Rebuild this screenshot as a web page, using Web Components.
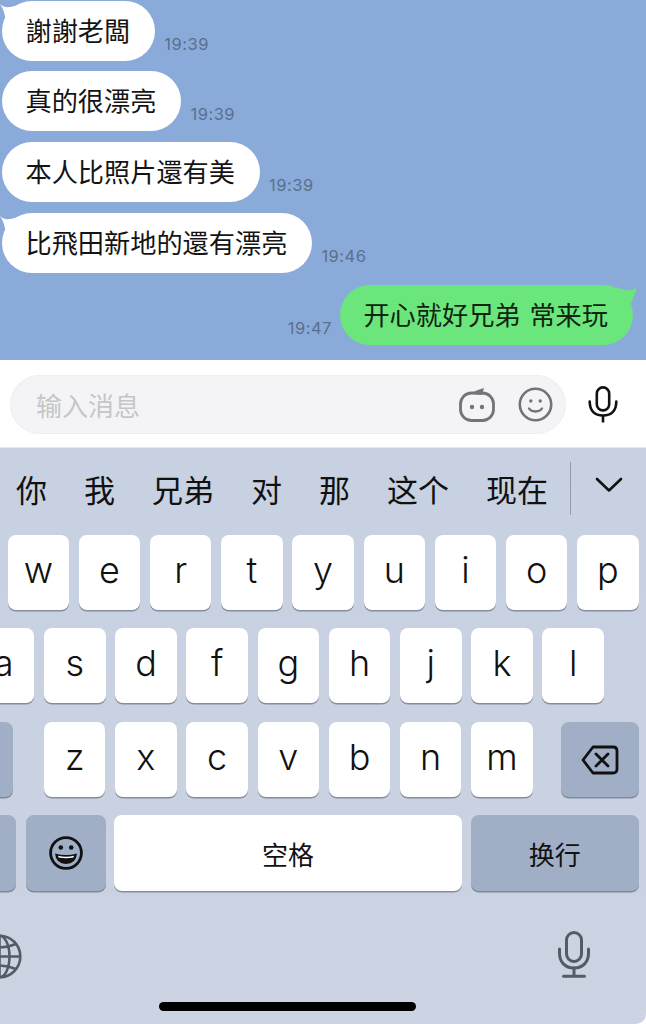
<!DOCTYPE html>
<html lang="zh">
<head>
<meta charset="utf-8">
<title>chat</title>
<style>
  html, body { margin: 0; padding: 0; background: #fff; }
  body { width: 646px; height: 1024px; overflow: hidden; display: flex; flex-direction: column;
    font-family: "Noto Sans CJK SC", "Liberation Sans", sans-serif; }
</style>
</head>
<body>
<chat-view>
  <chat-bubble time="19:39" tail style="margin-top:1px">謝謝老闆</chat-bubble>
  <chat-bubble time="19:39" style="margin-top:10px">真的很漂亮</chat-bubble>
  <chat-bubble time="19:39" style="margin-top:11px">本人比照片還有美</chat-bubble>
  <chat-bubble time="19:46" tail style="margin-top:11px">比飛田新地的還有漂亮</chat-bubble>
  <chat-bubble time="19:47" mine tail style="margin-top:12px">开心就好兄弟 常来玩</chat-bubble>
</chat-view>
<input-bar placeholder="输入消息"></input-bar>
<ime-keyboard></ime-keyboard>

<script>
class ChatView extends HTMLElement {
  constructor() {
    super();
    this.attachShadow({mode: 'open'}).innerHTML = `<style>
      :host { display: flex; flex-direction: column; height: 360px; box-sizing: border-box;
        background: #8aabd9; overflow: hidden; flex: none; }
    </style><slot></slot>`;
  }
}

class ChatBubble extends HTMLElement {
  connectedCallback() {
    if (this.shadowRoot) return;
    const mine = this.hasAttribute('mine');
    const tail = !this.hasAttribute('tail') ? '' : mine
      ? `<svg class="tail" width="22" height="18" viewBox="0 0 22 18"><path d="M0 1 Q12 7 21 2 Q18 10 15 17 L4 17 Z" fill="#6be67c"/></svg>`
      : `<svg class="tail" width="22" height="20" viewBox="0 0 22 20"><path d="M0 0 C3 3 6 3.5 10 3 C14 2.5 17 1 21 0 L21 19 L6 19 Q5 7 0 0 Z" fill="#fff"/></svg>`;
    this.attachShadow({mode: 'open'}).innerHTML = `<style>
      :host { display: flex; align-items: flex-end; flex: none; padding: 0 13px 0 2px; }
      :host([mine]) { flex-direction: row-reverse; }
      .bubble { position: relative; height: 60px; box-sizing: border-box; padding: 0 25px 2px 23.5px; border-radius: 30px;
        background: #fff; color: #141414; display: flex; align-items: center;
        font: 26.2px/1 "Noto Sans CJK TC", "Noto Sans CJK SC", sans-serif; white-space: pre; }
      :host([mine]) .bubble { background: #6be67c; font-family: "Noto Sans CJK SC", sans-serif; color: #10240f; word-spacing: 3px; }
      time { font: 16.5px/1 Inter, "Liberation Sans", sans-serif; letter-spacing: .5px; color: #5a6f8e; margin: 0 0 9px 9px; }
      :host([mine]) time { margin: 0 8px 9px 0; }
      .tail { position: absolute; left: -2px; top: 3px; }
      :host([mine]) .tail { left: auto; right: -5px; top: 1px; }
    </style>
    <div class="bubble">${tail}<slot></slot></div>
    <time>${this.getAttribute('time')}</time>`;
  }
}

class InputBar extends HTMLElement {
  connectedCallback() {
    if (this.shadowRoot) return;
    this.attachShadow({mode: 'open'}).innerHTML = `<style>
      :host { display: flex; align-items: center; height: 87px; box-sizing: border-box; padding: 2px 0 0 10px;
        background: #fff; flex: none; }
      .field { width: 556px; height: 59px; box-sizing: border-box; border-radius: 30px; background: #f4f4f6;
        border: 1px solid #eeeeef; display: flex; align-items: center; padding: 0 12px 0 25px; }
      .ph { flex: 1; font-size: 26px; line-height: 1; color: #c4c6c9; }
      .field svg { display: block; }
      .bot { margin-right: 22px; }
      .mic { margin-left: 22px; }
    </style>
    <div class="field">
      <span class="ph">${this.getAttribute('placeholder')}</span>
      <svg class="bot" width="37" height="35" viewBox="0 0 37 35" fill="none">
        <rect x="1.5" y="6" width="33" height="27.5" rx="11" stroke="#747474" stroke-width="2.8"/>
        <path d="M12 7 Q17 3 25 1 L23 8 Z" fill="#747474"/>
        <circle cx="13" cy="20" r="2.2" fill="#747474"/><circle cx="23" cy="20" r="2.2" fill="#747474"/>
      </svg>
      <svg width="35" height="35" viewBox="0 0 35 35" fill="none">
        <circle cx="17.5" cy="17.5" r="15.7" stroke="#747474" stroke-width="2.6"/>
        <circle cx="12.8" cy="14" r="1.7" fill="#747474"/><circle cx="22.2" cy="14" r="1.7" fill="#747474"/>
        <path d="M11 21.5 C13.5 25.5 21.5 25.5 24 21.5" stroke="#747474" stroke-width="2.3" stroke-linecap="round"/>
      </svg>
    </div>
    <svg class="mic" width="30" height="37" viewBox="0 0 30 37" fill="none" stroke="#111" stroke-width="2.6">
      <rect x="8.8" y="1.4" width="12.4" height="23" rx="6.2"/>
      <path d="M1.7 15.5 C1.7 25 7 29.5 15 29.5 C23 29.5 28.3 25 28.3 15.5" stroke-linecap="round"/>
      <path d="M15 29.5 V36.5"/>
    </svg>`;
  }
}

class KbKey extends HTMLElement {
  constructor() {
    super();
    this.attachShadow({mode: 'open'}).innerHTML = `<style>
      :host { display: flex; align-items: center; justify-content: center; flex: none; box-sizing: border-box;
        width: var(--w, 61.5px); height: var(--h, 75px); border-radius: 8px; background: #fff; color: #111;
        box-shadow: 0 1.5px 0 #868d9c; font: 300 36px/1 Inter, Roboto, "Liberation Sans", sans-serif; padding-bottom: 5px; }
      :host([dark]) { background: #a1afc6; box-shadow: 0 1.5px 0 #7f899c; padding-bottom: 0; }
      :host([cjk]) { font: 26px/1 "Noto Sans CJK SC", sans-serif; padding: 3px 0 0; }
    </style><slot></slot>`;
  }
}

class KbRow extends HTMLElement {
  constructor() {
    super();
    this.attachShadow({mode: 'open'}).innerHTML = `<style>
      :host { display: flex; gap: 9.7px; flex: none; }
    </style><slot></slot>`;
  }
}

class ImeKeyboard extends HTMLElement {
  connectedCallback() {
    if (this.shadowRoot) return;
    const letters = s => [...s].map(c => `<kb-key>${c}</kb-key>`).join('');
    const words = ['你', '我', '兄弟', '对', '那', '这个', '现在'];
    this.attachShadow({mode: 'open'}).innerHTML = `<style>
      :host { display: flex; flex-direction: column; height: 577px; flex: none; overflow: hidden;
        background: linear-gradient(#c7d1e1, #ccd3e2); border-bottom-right-radius: 10px;
        border-top: 1px solid #e4e8ef; box-sizing: border-box; }
      .cands { display: flex; align-items: center; height: 87px; flex: none; padding: 0 0 6px 16px; gap: 37px; box-sizing: border-box;
        font-size: 31px; line-height: 1; color: #111; white-space: nowrap; position: relative; }
      .cands .more { position: absolute; left: 570px; top: 14px; height: 53px; width: 1px; background: #959cab; }
      .cands svg { position: absolute; left: 595px; top: 29px; }
      .rows { display: flex; flex-direction: column; gap: 18.33px; }
      .r1 { margin-left: 7.6px; }
      .r2 { margin-left: -27.1px; }
      .r3 { margin-left: -65px; }
      .r4 { margin-left: -64px; --h: 76px; }
      .foot { display: flex; justify-content: space-between; align-items: center; height: 85px; flex: none; margin-top: 23px;
        padding: 0 56px 0 0; }
      .foot .globe { margin-left: -23px; }
      .foot .vmic { margin-top: -3px; }
      .home { width: 257px; height: 9px; border-radius: 5px; background: #000; margin: 3px 0 0 159px; flex: none; }
    </style>
    <div class="cands">
      ${words.map(w => `<span>${w}</span>`).join('')}
      <div class="more"></div>
      <svg width="28" height="16" viewBox="0 0 28 16" fill="none"><path d="M2 2 L14 13.5 L26 2" stroke="#111" stroke-width="2.6" stroke-linecap="round" stroke-linejoin="round"/></svg>
    </div>
    <div class="rows">
      <kb-row class="r1">${letters('wertyuiop')}</kb-row>
      <kb-row class="r2">${letters('asdfghjkl')}</kb-row>
      <kb-row class="r3">
        <kb-key dark style="--w:78px;margin-right:21.3px"></kb-key>
        ${letters('zxcvbnm')}
        <kb-key dark style="--w:78px;margin-left:18.6px">
          <svg width="38" height="30" viewBox="0 0 38 30" fill="none" stroke="#111" stroke-width="2.8" stroke-linejoin="round" stroke-linecap="round" style="margin-top:2px">
            <path d="M12 2 H32 Q36 2 36 6 V24 Q36 28 32 28 H12 L2 15 Z"/>
            <path d="M15 9 L27 21 M27 9 L15 21"/>
          </svg>
        </kb-key>
      </kb-row>
      <kb-row class="r4">
        <kb-key dark style="--w:80px"></kb-key>
        <kb-key dark style="--w:80px">
          <svg width="36" height="36" viewBox="0 0 36 36" fill="none">
            <circle cx="18" cy="18" r="15.4" stroke="#111" stroke-width="2.8"/>
            <circle cx="12.8" cy="12.5" r="2.3" fill="#111"/><circle cx="23.2" cy="12.5" r="2.3" fill="#111"/>
            <path d="M7 18.5 Q18 21.5 29 18.5 Q28 29 18 29 Q8 29 7 18.5 Z" fill="#111"/>
            <path d="M10 20.8 Q18 22.6 26 20.8 L25.4 22.6 Q18 24 10.6 22.6 Z" fill="#fff"/>
          </svg>
        </kb-key>
        <kb-key cjk style="--w:348px;margin-left:-1.4px">空格</kb-key>
        <kb-key cjk dark style="--w:168px;margin-left:-.8px">换行</kb-key>
      </kb-row>
    </div>
    <div class="foot">
      <svg class="globe" width="45" height="45" viewBox="0 0 45 45" fill="none" stroke="#545b68" stroke-width="2.6">
        <circle cx="22.5" cy="22.5" r="20.8"/>
        <ellipse cx="22.5" cy="22.5" rx="10" ry="20.8"/>
        <path d="M22.5 2 V43 M2 22.5 H43 M6 10 Q22.5 17 39 10 M6 35 Q22.5 28 39 35"/>
      </svg>
      <svg class="vmic" width="32" height="47" viewBox="0 0 32 47" fill="none" stroke="#545b68" stroke-width="3">
        <rect x="8.5" y="1.5" width="15" height="29" rx="7.5"/>
        <path d="M1.5 18 V22 C1.5 31 7 37 16 37 C25 37 30.5 31 30.5 22 V18" stroke-linecap="round"/>
        <path d="M16 37 V45 M5.5 45.2 H26.5" stroke-linecap="round"/>
      </svg>
    </div>
    <div class="home"></div>`;
  }
}

customElements.define('chat-view', ChatView);
customElements.define('chat-bubble', ChatBubble);
customElements.define('input-bar', InputBar);
customElements.define('kb-key', KbKey);
customElements.define('kb-row', KbRow);
customElements.define('ime-keyboard', ImeKeyboard);
</script>
</body>
</html>
